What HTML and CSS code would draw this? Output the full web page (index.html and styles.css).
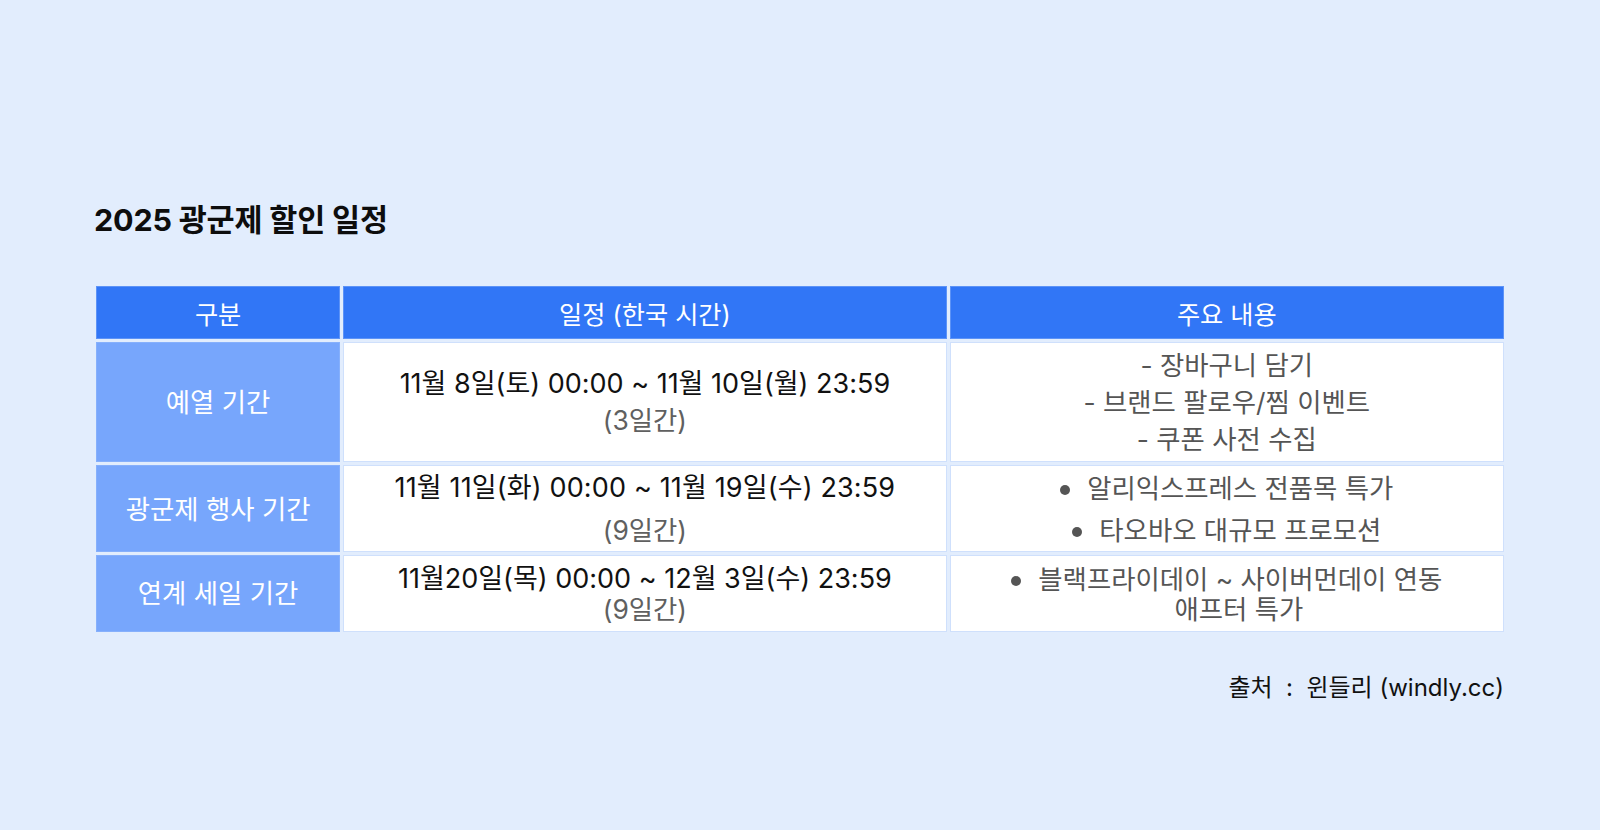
FILE: index.html
```html
<!DOCTYPE html>
<html lang="ko">
<head>
<meta charset="utf-8">
<title>2025 광군제 할인 일정</title>
<link rel="stylesheet" href="styles.css">
</head>
<body>
<main class="page">
  <h1 class="title">2025 광군제 할인 일정</h1>
  <table class="schedule">
    <colgroup>
      <col class="c1">
      <col class="c2">
      <col class="c3">
    </colgroup>
    <thead>
      <tr class="head-row">
        <th>구분</th>
        <th>일정 (한국 시간)</th>
        <th>주요 내용</th>
      </tr>
    </thead>
    <tbody>
      <tr class="row row-1">
        <th class="label">예열 기간</th>
        <td class="date"><span class="main">11월 8일(토) 00:00 ~ 11월 10일(월) 23:59</span><br><span class="sub">(3일간)</span></td>
        <td class="desc">- 장바구니 담기<br>- 브랜드 팔로우/찜 이벤트<br>- 쿠폰 사전 수집</td>
      </tr>
      <tr class="row row-2">
        <th class="label">광군제 행사 기간</th>
        <td class="date"><span class="main">11월 11일(화) 00:00 ~ 11월 19일(수) 23:59</span><br><span class="sub">(9일간)</span></td>
        <td class="desc">
          <ul class="bullets">
            <li>알리익스프레스 전품목 특가</li>
            <li>타오바오 대규모 프로모션</li>
          </ul>
        </td>
      </tr>
      <tr class="row row-3">
        <th class="label">연계 세일 기간</th>
        <td class="date"><span class="main">11월20일(목) 00:00 ~ 12월 3일(수) 23:59</span><br><span class="sub">(9일간)</span></td>
        <td class="desc">
          <ul class="bullets">
            <li>블랙프라이데이 ~ 사이버먼데이 연동<br><span class="cont">애프터 특가</span></li>
          </ul>
        </td>
      </tr>
    </tbody>
  </table>
  <p class="source">출처 &nbsp;:&nbsp; 윈들리 (windly.cc)</p>
</main>
</body>
</html>
```

FILE: styles.css
```css
html, body {
  margin: 0;
  padding: 0;
}

body {
  background: #e2edfd;
  font-family: Inter, "Noto Sans CJK KR", sans-serif;
  color: #111;
  width: 1600px;
  height: 830px;
  overflow: hidden;
}

.page {
  padding: 198px 96px 0 96px;
}

.title {
  margin: 0 0 41px -2px;
  font-size: 30.5px;
  line-height: 44px;
  font-weight: 700;
  color: #0d0d0d;
  letter-spacing: -0.2px;
}

.schedule {
  width: 1414px;
  margin: 0 -3px;
  border-collapse: separate;
  border-spacing: 3px;
  table-layout: fixed;
}

.c1 { width: 244px; }
.c2 { width: 603px; }
.c3 { width: 554px; }

.schedule th,
.schedule td {
  padding: 0;
  text-align: center;
  vertical-align: middle;
  font-size: 26.4px;
  font-weight: 400;
  border: 1px solid #cfe0fc;
}

.head-row th {
  height: 51px;
  background: #3176f6;
  color: #fff;
  font-size: 25.2px;
  border-color: #5d93f7;
}

.label {
  background: #77a6fc;
  color: #fff;
  border-color: #86b0fc !important;
}

.date,
.desc {
  background: #fff;
}

.date .main {
  color: #111;
  font-size: 27px;
}

.row-2 .date .main {
  letter-spacing: 0.15px;
}

.date .sub {
  color: #606060;
}

.desc {
  color: #555;
}

.row-1 th, .row-1 td { height: 118px; line-height: 37px; }
.row-2 th, .row-2 td { height: 85px; line-height: 42px; }
.row-3 th, .row-3 td { height: 75px; line-height: 31px; }
.row-3 .desc { line-height: 30px; }

.bullets {
  list-style: none;
  margin: 0;
  padding: 0;
}

.bullets li::before {
  content: "";
  display: inline-block;
  width: 10px;
  height: 10px;
  border-radius: 50%;
  background: #555;
  margin-right: 17px;
  vertical-align: 3px;
}

.bullets .cont {
  display: inline-block;
  padding-left: 24px;
}

.source {
  margin: 36px 0 0 0;
  text-align: right;
  font-size: 24px;
  line-height: 34px;
  color: #111;
}
```
